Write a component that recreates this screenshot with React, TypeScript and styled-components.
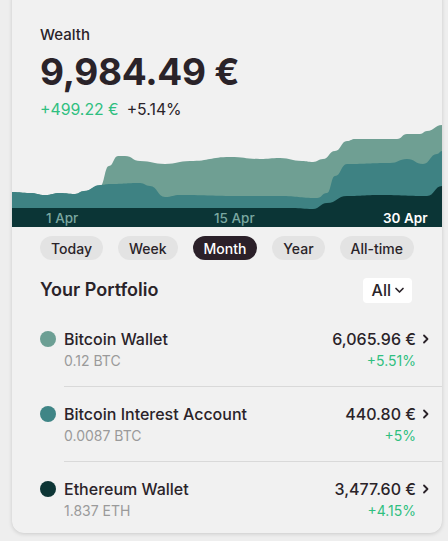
import React from "react";
import styled, { createGlobalStyle } from "styled-components";

const Global = createGlobalStyle`
  html, body { margin: 0; padding: 0; background: #eeeeee; }
  body { font-family: Inter, "Noto Sans", sans-serif; color: #2a2329; }
  * { box-sizing: border-box; }
`;

const Page = styled.div`
  width: 448px;
  height: 541px;
  padding: 0 6px 0 12px;
  overflow: hidden;
`;

const Card = styled.div`
  width: 430px;
  margin-top: -12px;
  background: #f1f1f1;
  border-radius: 12px;
  box-shadow: 0 1px 4px rgba(0, 0, 0, 0.14), 0 0 1px rgba(0, 0, 0, 0.08);
  overflow: hidden;
`;

const Header = styled.div`
  padding: 36px 28px 0 28px;
  display: flex;
  flex-direction: column;
`;

const Label = styled.div`
  font-size: 15px;
  font-weight: 500;
  line-height: 22px;
`;

const Total = styled.div`
  font-size: 37px;
  font-weight: 700;
  line-height: 44px;
  margin-top: 4px;
  letter-spacing: -0.3px;
`;

const ChangeLine = styled.div`
  display: flex;
  gap: 8px;
  font-size: 15.8px;
  line-height: 22px;
  margin-top: 5px;
`;

const Green = styled.span`
  color: #2fbf80;
`;

const ChartWrap = styled.div`
  position: relative;
  height: 106px;
`;

const ChartSvg = styled.svg`
  display: block;
  width: 430px;
  height: 106px;
`;

const AxisRow = styled.div`
  position: absolute;
  left: 0;
  right: 0;
  bottom: 0;
  height: 19px;
  display: flex;
  align-items: center;
  font-size: 13.5px;
  font-weight: 500;
`;

const AxisLabel = styled.span<{ $x: number; $strong?: boolean }>`
  position: absolute;
  left: ${(p) => p.$x}px;
  color: ${(p) => (p.$strong ? "#ffffff" : "#7aa8a1")};
  font-weight: ${(p) => (p.$strong ? 600 : 500)};
`;

const Pills = styled.div`
  display: flex;
  justify-content: space-between;
  padding: 9px 28px 0 28px;
`;

const Pill = styled.button<{ $active?: boolean }>`
  border: none;
  font-family: inherit;
  font-size: 14px;
  font-weight: 500;
  height: 24px;
  padding: 0 11px;
  border-radius: 12px;
  background: ${(p) => (p.$active ? "#2b2029" : "#e3e3e3")};
  color: ${(p) => (p.$active ? "#ffffff" : "#2a2329")};
`;

const SectionHead = styled.div`
  display: flex;
  justify-content: space-between;
  align-items: center;
  padding: 17px 30px 0 28px;
`;

const SectionTitle = styled.div`
  font-size: 18px;
  font-weight: 600;
  line-height: 26px;
`;

const Select = styled.div`
  display: flex;
  align-items: center;
  gap: 3px;
  background: #ffffff;
  border-radius: 4px;
  height: 25px;
  padding: 0 7px 0 9px;
  font-size: 16px;
  font-weight: 500;
`;

const List = styled.div`
  display: flex;
  flex-direction: column;
  padding-top: 9px;
`;

const Row = styled.div`
  display: flex;
  padding-left: 28px;
`;

const DotCol = styled.div`
  width: 24px;
  padding-top: 19px;
`;

const Dot = styled.div<{ $color: string }>`
  width: 16px;
  height: 16px;
  border-radius: 50%;
  background: ${(p) => p.$color};
`;

const RowBody = styled.div<{ $last?: boolean }>`
  flex: 1;
  display: flex;
  justify-content: space-between;
  padding: 16px 12px ${(p) => (p.$last ? 11 : 14)}px 0;
  border-bottom: ${(p) => (p.$last ? "none" : "1px solid #d9d9d9")};
`;

const Col = styled.div<{ $right?: boolean }>`
  display: flex;
  flex-direction: column;
  align-items: ${(p) => (p.$right ? "flex-end" : "flex-start")};
`;

const Name = styled.div`
  font-size: 16px;
  font-weight: 500;
  line-height: 22px;
`;

const Sub = styled.div`
  font-size: 14px;
  line-height: 22px;
  color: #9a9a9a;
`;

const ValueLine = styled.div`
  display: flex;
  align-items: center;
  gap: 6px;
  font-size: 16px;
  font-weight: 500;
  line-height: 22px;
`;

const Pct = styled.div`
  font-size: 14px;
  line-height: 22px;
  color: #2fbf80;
  margin-right: 14px;
`;

const Chevron = () => (
  <svg width="8" height="12" viewBox="0 0 8 12">
    <path d="M2 2.5 L5.5 6 L2 9.5" fill="none" stroke="#2a2329" strokeWidth="1.8" strokeLinecap="round" strokeLinejoin="round" />
  </svg>
);

const ChevronDown = () => (
  <svg width="11" height="8" viewBox="0 0 11 8">
    <path d="M2 2.5 L5.5 6 L9 2.5" fill="none" stroke="#2a2329" strokeWidth="1.7" strokeLinecap="round" strokeLinejoin="round" />
  </svg>
);

// chart coordinates: x 0..430 (page x - 12), y 0..106 (page y - 120)
const top = [
  [0, 71], [18, 72], [33, 74], [48, 72], [63, 73], [72, 70], [88, 65], [97, 45], [106, 35], [113, 35],
  [128, 40], [153, 43], [178, 40], [218, 36], [248, 38], [268, 37], [290, 40], [301, 41], [311, 38],
  [323, 30], [335, 20], [343, 18], [385, 18], [395, 13], [408, 13], [415, 10], [430, 4],
];
const mid = [
  [0, 71], [18, 72], [33, 74], [48, 72], [63, 73], [72, 70], [88, 64], [98, 63], [128, 62], [138, 65],
  [153, 76], [168, 74], [228, 75], [268, 75], [305, 77], [315, 72], [323, 55], [335, 43], [378, 42],
  [395, 38], [411, 43], [425, 33], [430, 30],
];
const dark = [
  [0, 87], [280, 87], [301, 88], [315, 82], [335, 75], [368, 74], [415, 75], [430, 65],
];

function areaPath(pts: number[][]) {
  let d = `M0 106 L${pts[0][0]} ${pts[0][1]}`;
  for (let i = 1; i < pts.length; i++) {
    const [x0, y0] = pts[i - 1];
    const [x1, y1] = pts[i];
    const cx = (x0 + x1) / 2;
    d += ` C${cx} ${y0} ${cx} ${y1} ${x1} ${y1}`;
  }
  d += ` L430 106 Z`;
  return d;
}

const accounts = [
  { name: "Bitcoin Wallet", sub: "0.12 BTC", value: "6,065.96 €", pct: "+5.51%", color: "#6c9f94" },
  { name: "Bitcoin Interest Account", sub: "0.0087 BTC", value: "440.80 €", pct: "+5%", color: "#3f8586" },
  { name: "Ethereum Wallet", sub: "1.837 ETH", value: "3,477.60 €", pct: "+4.15%", color: "#0d3535" },
];

const ranges = ["Today", "Week", "Month", "Year", "All-time"];

export default function App() {
  return (
    <>
      <Global />
      <Page>
        <Card>
          <Header>
            <Label>Wealth</Label>
            <Total>9,984.49 €</Total>
            <ChangeLine>
              <Green>+499.22 €</Green>
              <span>+5.14%</span>
            </ChangeLine>
          </Header>
          <ChartWrap>
            <ChartSvg viewBox="0 0 430 106" preserveAspectRatio="none">
              <path d={areaPath(top)} fill="#6f9f93" />
              <path d={areaPath(mid)} fill="#3e8283" />
              <path d={areaPath(dark)} fill="#0b3536" />
            </ChartSvg>
            <AxisRow>
              <AxisLabel $x={34}>1 Apr</AxisLabel>
              <AxisLabel $x={202}>15 Apr</AxisLabel>
              <AxisLabel $x={371} $strong>30 Apr</AxisLabel>
            </AxisRow>
          </ChartWrap>
          <Pills>
            {ranges.map((r) => (
              <Pill key={r} $active={r === "Month"}>{r}</Pill>
            ))}
          </Pills>
          <SectionHead>
            <SectionTitle>Your Portfolio</SectionTitle>
            <Select>
              All <ChevronDown />
            </Select>
          </SectionHead>
          <List>
            {accounts.map((a, i) => (
              <Row key={a.name}>
                <DotCol>
                  <Dot $color={a.color} />
                </DotCol>
                <RowBody $last={i === accounts.length - 1}>
                  <Col>
                    <Name>{a.name}</Name>
                    <Sub>{a.sub}</Sub>
                  </Col>
                  <Col $right>
                    <ValueLine>
                      {a.value}
                      <Chevron />
                    </ValueLine>
                    <Pct>{a.pct}</Pct>
                  </Col>
                </RowBody>
              </Row>
            ))}
          </List>
        </Card>
      </Page>
    </>
  );
}
